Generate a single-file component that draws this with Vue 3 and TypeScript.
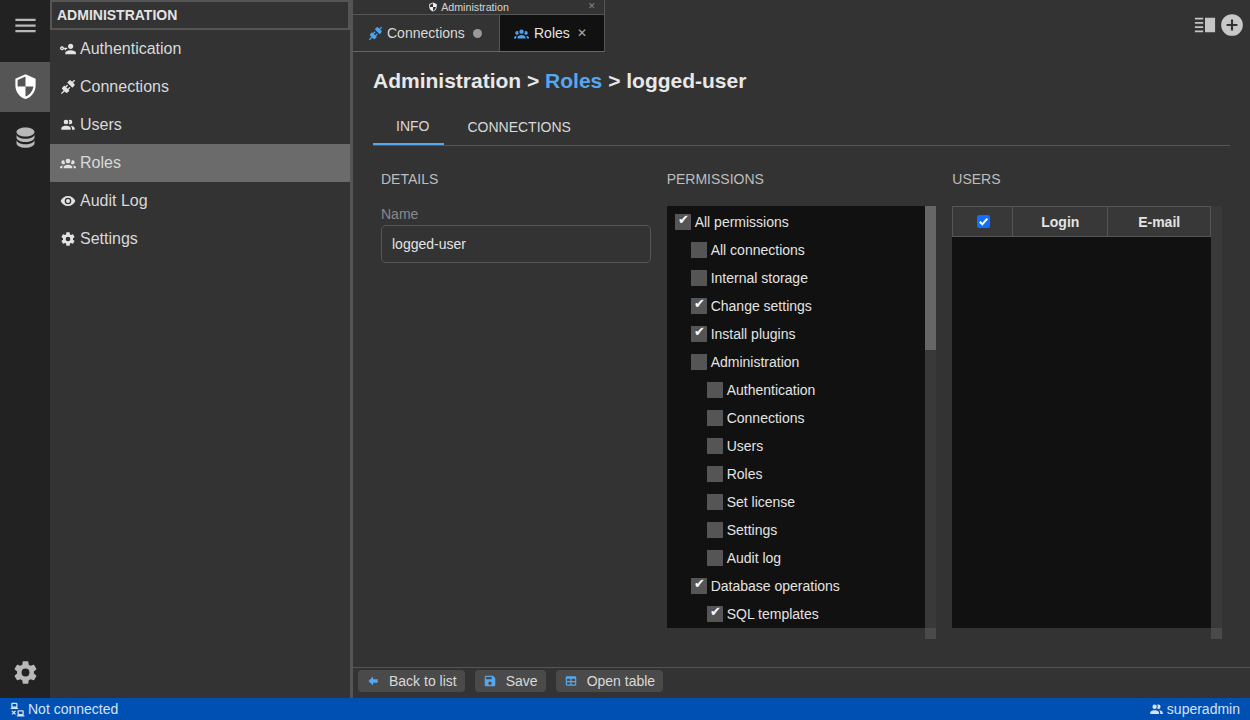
<script setup lang="ts">
const P = {
  menu: 'M3,6H21V8H3V6M3,11H21V13H3V11M3,16H21V18H3V16Z',
  database: 'M12,3C7.58,3 4,4.79 4,7C4,9.21 7.58,11 12,11C16.42,11 20,9.21 20,7C20,4.79 16.42,3 12,3M4,9V12C4,14.21 7.58,16 12,16C16.42,16 20,14.21 20,12V9C20,11.21 16.42,13 12,13C7.58,13 4,11.21 4,9M4,14V17C4,19.21 7.58,21 12,21C16.42,21 20,19.21 20,17V14C20,16.21 16.42,18 12,18C7.58,18 4,16.21 4,14Z',
  cog: 'M12,15.5A3.5,3.5 0 0,1 8.5,12A3.5,3.5 0 0,1 12,8.5A3.5,3.5 0 0,1 15.5,12A3.5,3.5 0 0,1 12,15.5M19.43,12.97C19.47,12.65 19.5,12.33 19.5,12C19.5,11.67 19.47,11.34 19.43,11L21.54,9.37C21.73,9.22 21.78,8.95 21.66,8.73L19.66,5.27C19.54,5.05 19.27,4.96 19.05,5.05L16.56,6.05C16.04,5.66 15.5,5.32 14.87,5.07L14.5,2.42C14.46,2.18 14.25,2 14,2H10C9.75,2 9.54,2.18 9.5,2.42L9.13,5.07C8.5,5.32 7.96,5.66 7.44,6.05L4.95,5.05C4.73,4.96 4.46,5.05 4.34,5.27L2.34,8.73C2.21,8.95 2.27,9.22 2.46,9.37L4.57,11C4.53,11.34 4.5,11.67 4.5,12C4.5,12.33 4.53,12.65 4.57,12.97L2.46,14.63C2.27,14.78 2.21,15.05 2.34,15.27L4.34,18.73C4.46,18.95 4.73,19.03 4.95,18.95L7.44,17.94C7.96,18.34 8.5,18.68 9.13,18.93L9.5,21.58C9.54,21.82 9.75,22 10,22H14C14.25,22 14.46,21.82 14.5,21.58L14.87,18.93C15.5,18.67 16.04,18.34 16.56,17.94L19.05,18.95C19.27,19.03 19.54,18.95 19.66,18.73L21.66,15.27C21.78,15.05 21.73,14.78 21.54,14.63L19.43,12.97Z',
  users: 'M16 17V19H2V17S2 13 9 13 16 17 16 17M12.5 7.5A3.5 3.5 0 1 0 9 11A3.5 3.5 0 0 0 12.5 7.5M15.94 13A5.32 5.32 0 0 1 18 17V19H22V17S22 13.37 15.94 13M15 4A3.39 3.39 0 0 0 13.07 4.59A5 5 0 0 1 13.07 10.41A3.39 3.39 0 0 0 15 11A3.5 3.5 0 0 0 15 4Z',
  group: 'M12,5.5A3.5,3.5 0 0,1 15.5,9A3.5,3.5 0 0,1 12,12.5A3.5,3.5 0 0,1 8.5,9A3.5,3.5 0 0,1 12,5.5M5,8C5.56,8 6.08,8.15 6.53,8.42C6.38,9.85 6.8,11.27 7.66,12.38C7.16,13.34 6.16,14 5,14A3,3 0 0,1 2,11A3,3 0 0,1 5,8M19,8A3,3 0 0,1 22,11A3,3 0 0,1 19,14C17.84,14 16.84,13.34 16.34,12.38C17.2,11.27 17.62,9.85 17.47,8.42C17.92,8.15 18.44,8 19,8M5.5,18.25C5.5,16.18 8.41,14.5 12,14.5C15.59,14.5 18.5,16.18 18.5,18.25V20H5.5V18.25M0,20V18.5C0,17.11 1.89,15.94 4.45,15.6C3.86,16.28 3.5,17.22 3.5,18.25V20H0M24,20H20.5V18.25C20.5,17.22 20.14,16.28 19.55,15.6C22.11,15.94 24,17.11 24,18.5V20Z',
  eye: 'M12,9A3,3 0 0,0 9,12A3,3 0 0,0 12,15A3,3 0 0,0 15,12A3,3 0 0,0 12,9M12,17A5,5 0 0,1 7,12A5,5 0 0,1 12,7A5,5 0 0,1 17,12A5,5 0 0,1 12,17M12,4.5C7,4.5 2.73,7.61 1,12C2.73,16.39 7,19.5 12,19.5C17,19.5 21.27,16.39 23,12C21.27,7.61 17,4.5 12,4.5Z',
  plug: 'M21.4 7.5C22.2 8.3 22.2 9.6 21.4 10.3L18.6 13.1L10.8 5.3L13.6 2.5C14.4 1.7 15.7 1.7 16.4 2.5L18.2 4.3L21.2 1.3L22.6 2.7L19.6 5.7L21.4 7.5M15.6 13.3L14.2 11.9L11.4 14.7L9.3 12.6L12.1 9.8L10.7 8.4L7.9 11.2L6.4 9.8L3.6 12.6C2.8 13.4 2.8 14.7 3.6 15.4L5.4 17.2L1.4 21.2L2.8 22.6L6.8 18.6L8.6 20.4C9.4 21.2 10.7 21.2 11.4 20.4L14.2 17.6L12.8 16.2L15.6 13.3Z',
  key: 'M11 10V12H9V14H7V12H5.8C5.4 13.2 4.3 14 3 14C1.3 14 0 12.7 0 11S1.3 8 3 8C4.3 8 5.4 8.8 5.8 10H11M3 10C2.4 10 2 10.4 2 11S2.4 12 3 12 4 11.6 4 11 3.6 10 3 10M16 14C18.7 14 24 15.3 24 18V20H8V18C8 15.3 13.3 14 16 14M16 12C13.8 12 12 10.2 12 8S13.8 4 16 4 20 5.8 20 8 18.2 12 16 12Z',
  back: 'M20,9V15H12V19.84L4.16,12L12,4.16V9H20Z',
  save: 'M15,9H5V5H15M12,19A3,3 0 0,1 9,16A3,3 0 0,1 12,13A3,3 0 0,1 15,16A3,3 0 0,1 12,19M17,3H5C3.89,3 3,3.9 3,5V19A2,2 0 0,0 5,21H19A2,2 0 0,0 21,19V7L17,3Z',
  table: 'M5,4H19A2,2 0 0,1 21,6V18A2,2 0 0,1 19,20H5A2,2 0 0,1 3,18V6A2,2 0 0,1 5,4M5,8V12H11V8H5M13,8V12H19V8H13M5,14V18H11V14H5M13,14V18H19V14H13Z',
  security: 'M12,12H19C18.47,16.11 15.72,19.78 12,20.92V12H5V6.3L12,3.19M12,1L3,5V11C3,16.55 6.84,21.73 12,23C17.16,21.73 21,16.55 21,11V5L12,1Z',
  plusCircle: 'M12,2A10,10 0 0,0 2,12A10,10 0 0,0 12,22A10,10 0 0,0 22,12A10,10 0 0,0 12,2M17,13H13V17H11V13H7V11H11V7H13V11H17V13Z',
  layout: 'M1,4H10V6H1V4M1,8.7H10V10.7H1V8.7M1,13.3H10V15.3H1V13.3M1,18H10V20H1V18M12,4H23V20H12V4Z',
  lan: 'M4,1C2.89,1 2,1.89 2,3V7C2,8.11 2.89,9 4,9H1V11H13V9H10C11.11,9 12,8.11 12,7V3C12,1.89 11.11,1 10,1H4M4,3H10V7H4V3M14,13C12.89,13 12,13.89 12,15V19C12,20.11 12.89,21 14,21H11V23H23V21H20C21.11,21 22,20.11 22,19V15C22,13.89 21.11,13 20,13H14M3.88,13.46L2.46,14.88L4.59,17L2.46,19.12L3.88,20.54L6,18.41L8.12,20.54L9.54,19.12L7.41,17L9.54,14.88L8.12,13.46L6,15.59L3.88,13.46M14,15H20V19H14V15Z',
}
const sideItems = [
  { label: 'Authentication', d: P.key },
  { label: 'Connections', d: P.plug },
  { label: 'Users', d: P.users },
  { label: 'Roles', d: P.group, active: true },
  { label: 'Audit Log', d: P.eye },
  { label: 'Settings', d: P.cog },
]
const perms = [
  { label: 'All permissions', level: 0, on: true },
  { label: 'All connections', level: 1, on: false },
  { label: 'Internal storage', level: 1, on: false },
  { label: 'Change settings', level: 1, on: true },
  { label: 'Install plugins', level: 1, on: true },
  { label: 'Administration', level: 1, on: false },
  { label: 'Authentication', level: 2, on: false },
  { label: 'Connections', level: 2, on: false },
  { label: 'Users', level: 2, on: false },
  { label: 'Roles', level: 2, on: false },
  { label: 'Set license', level: 2, on: false },
  { label: 'Settings', level: 2, on: false },
  { label: 'Audit log', level: 2, on: false },
  { label: 'Database operations', level: 1, on: true },
  { label: 'SQL templates', level: 2, on: true },
]
const buttons = [
  { label: 'Back to list', d: P.back },
  { label: 'Save', d: P.save },
  { label: 'Open table', d: P.table },
]
</script>

<template>
  <div class="app">
    <div class="body">
      <nav class="rail">
        <div class="rail-btn first"><svg class="rail-ico" viewBox="0 0 24 24"><path :d="P.menu" /></svg></div>
        <div class="rail-btn on">
          <svg class="rail-ico white" viewBox="0 0 24 24"><path :d="P.security" /></svg>
        </div>
        <div class="rail-btn"><svg class="rail-ico db" viewBox="0 0 24 24"><path :d="P.database" /></svg></div>
        <div class="rail-btn cog"><svg class="rail-ico" viewBox="0 0 24 24"><path :d="P.cog" /></svg></div>
      </nav>

      <aside class="side">
        <div class="side-head">ADMINISTRATION</div>
        <div v-for="it in sideItems" :key="it.label" class="side-item" :class="{ active: it.active }">
          <svg class="side-ico" viewBox="0 0 24 24"><path :d="it.d" /></svg>
          <span>{{ it.label }}</span>
        </div>
      </aside>

      <div class="split"></div>

      <main class="main">
        <header class="tabbar">
          <div class="tabgroup">
            <div class="group-head">
              <svg class="group-ico" viewBox="0 0 24 24"><path :d="P.security" /></svg>
              <span>Administration</span>
              <span class="group-x">✕</span>
            </div>
            <div class="tabs">
              <div class="tab">
                <svg class="tab-ico" viewBox="0 0 24 24"><path :d="P.plug" /></svg>
                <span>Connections</span>
                <i class="dot"></i>
              </div>
              <div class="tab cur">
                <svg class="tab-ico" viewBox="0 0 24 24"><path :d="P.group" /></svg>
                <span>Roles</span>
                <span class="tab-x">✕</span>
              </div>
            </div>
          </div>
          <div class="corner">
            <svg class="layout" viewBox="0 0 24 24"><path :d="P.layout" /></svg>
            <svg class="plus" viewBox="0 0 24 24"><path :d="P.plusCircle" /></svg>
          </div>
        </header>

        <section class="content">
          <h1 class="title">Administration &gt; <span class="link">Roles</span> &gt; logged-user</h1>
          <div class="subtabs">
            <div class="subtab cur">INFO</div>
            <div class="subtab">CONNECTIONS</div>
          </div>
          <div class="cols">
            <div class="col">
              <div class="cap">DETAILS</div>
              <label class="name-lab">Name</label>
              <div class="input">logged-user</div>
            </div>
            <div class="col">
              <div class="cap">PERMISSIONS</div>
              <div class="scrollbox">
                <div class="pane list">
                  <div v-for="p in perms" :key="p.label + p.level" class="perm" :class="'lv' + p.level">
                    <span class="cb"><span v-if="p.on" class="cb-check">✔</span></span>
                    <span>{{ p.label }}</span>
                  </div>
                </div>
                <div class="track"><div class="thumb"></div></div>
              </div>
              <div class="hbar"><div class="hcorner"></div></div>
            </div>
            <div class="col">
              <div class="cap">USERS</div>
              <div class="scrollbox">
                <div class="pane">
                  <div class="thead">
                    <div class="th c1"><span class="native"><svg viewBox="0 0 13 13"><path d="M2.8,6.8L5.3,9.3L10.3,3.6" /></svg></span></div>
                    <div class="th c2">Login</div>
                    <div class="th c3">E-mail</div>
                  </div>
                </div>
                <div class="track"></div>
              </div>
              <div class="hbar"><div class="hcorner"></div></div>
            </div>
          </div>
        </section>

        <footer class="toolbar">
          <button v-for="b in buttons" :key="b.label" class="btn">
            <svg class="btn-ico" viewBox="0 0 24 24"><path :d="b.d" /></svg>
            <span>{{ b.label }}</span>
          </button>
        </footer>
      </main>
    </div>

    <div class="status">
      <div class="st-item"><svg class="st-ico" viewBox="0 0 24 24"><path :d="P.lan" /></svg><span>Not connected</span></div>
      <div class="st-item"><svg class="st-ico" viewBox="0 0 24 24"><path :d="P.users" /></svg><span>superadmin</span></div>
    </div>
  </div>
</template>

<style>
html, body { margin: 0; background: #333; }
</style>

<style scoped>
.app {
  width: 1250px; height: 720px; display: flex; flex-direction: column; overflow: hidden;
  font-family: "Liberation Sans", Arial, sans-serif; color: #e3e3e3; background: #333; font-size: 14px;
}
.body { flex: 1; display: flex; min-height: 0; }

.rail { width: 50px; background: #222; display: flex; flex-direction: column; flex: none; }
.rail-btn { height: 50px; display: flex; align-items: center; justify-content: center; box-sizing: border-box; }
.rail-btn.first { height: 62px; padding-bottom: 12px; }
.rail-btn.on { background: #555; padding-bottom: 2px; }
.rail-btn.cog { margin-top: auto; height: 52px; }
.rail-ico { width: 27px; height: 27px; fill: #b8b8b8; }
.rail-ico.white { fill: #fff; }

.side { width: 300px; flex: none; background: #333; display: flex; flex-direction: column; }
.side-head {
  height: 30px; box-sizing: border-box; border: 2px solid #555;
  padding-left: 5px; display: flex; align-items: center; font-weight: 700; font-size: 14px; color: #e3e3e3;
}
.side-item { height: 38px; display: flex; align-items: center; padding-left: 10px; font-size: 16px; color: #d9d9d9; }
.side-item.active { background: #6b6b6b; }
.side-ico { width: 16px; height: 16px; fill: #e3e3e3; margin-right: 4px; flex: none; }

.split { width: 3px; flex: none; background: #555; }

.main { flex: 1; min-width: 0; display: flex; flex-direction: column; background: #333; }
.tabbar { height: 52px; flex: none; display: flex; }
.tabgroup { width: 251px; display: flex; flex-direction: column; border-right: 1px solid #555; }
.group-head {
  height: 14px; border-bottom: 1px solid #555; display: flex; align-items: center; justify-content: center;
  font-size: 10.7px; color: #d4d4d4; position: relative; gap: 3px; padding-right: 20px; box-sizing: content-box;
}
.group-ico { width: 10px; height: 10px; fill: #eee; }
.group-x { position: absolute; right: 8px; top: 1px; font-size: 9px; color: #888; }
.tabs { height: 37px; display: flex; border-bottom: 1px solid #666; box-sizing: border-box; }
.tab { width: 147px; display: flex; align-items: center; padding-left: 15px; box-sizing: border-box; border-right: 1px solid #555; font-size: 14px; color: #d9d9d9; }
.tab.cur { flex: 1; width: auto; background: #111; border-right: 0; color: #e3e3e3; padding-left: 14px; }
.tab-ico { width: 15px; height: 15px; fill: #4da3f0; margin-right: 4px; }
.tab.cur .tab-ico { margin-right: 5px; }
.dot { width: 9px; height: 9px; border-radius: 50%; background: #999; margin-left: 8px; }
.tab-x { font-size: 12px; color: #aaa; margin-left: 7px; }
.corner { margin-left: auto; display: flex; align-items: center; padding: 8px 5px 0 0; gap: 3px; height: 34px; }
.layout { width: 22px; height: 22px; fill: #c4c4c4; }
.plus { width: 26px; height: 26px; fill: #c8c8c8; }

.content { flex: 1; min-height: 0; padding: 0 20px; display: flex; flex-direction: column; border-bottom: 1px solid #555; overflow: hidden; }
.title { margin: 0; height: 58px; line-height: 58px; font-size: 21px; font-weight: 700; color: #e8e8e8; white-space: nowrap; }
.link { color: #55a8f0; }
.subtabs { height: 35px; display: flex; border-bottom: 1px solid #555; flex: none; }
.subtab { font-size: 14px; color: #d9d9d9; line-height: 35px; padding: 0 23px; box-sizing: border-box; height: 35px; }
.subtab.cur { line-height: 33px; padding-right: 15px; border-bottom: 2px solid #55a8f0; }

.cols { display: grid; grid-template-columns: repeat(3, 1fr); gap: 16px; padding: 0 8px; }
.col { min-width: 0; }
.cap { height: 60px; line-height: 66px; font-size: 14px; color: #bdbdbd; }
.name-lab { display: block; height: 19px; line-height: 16px; color: #8a8a8a; font-size: 14px; }
.input {
  height: 38px; box-sizing: border-box; border: 1px solid #555; border-radius: 5px; padding-left: 10px;
  display: flex; align-items: center; font-size: 14px; color: #e3e3e3;
}

.scrollbox { display: flex; height: 422px; }
.pane { flex: 1; min-width: 0; background: #111; overflow: hidden; box-sizing: border-box; }
.pane.list { padding-top: 2px; }
.track { width: 11px; flex: none; background: #393939; }
.thumb { height: 144px; background: #666; }
.hbar { height: 11px; display: flex; justify-content: flex-end; }
.hcorner { width: 11px; background: #4a4a4a; }

.perm { height: 28px; display: flex; align-items: center; font-size: 14px; color: #e3e3e3; }
.perm.lv0 { padding-left: 8px; }
.perm.lv1 { padding-left: 24px; }
.perm.lv2 { padding-left: 40px; }
.cb { width: 16px; height: 16px; background: #555; margin-right: 4px; flex: none; position: relative; display: block; }
.cb-check { position: absolute; left: 3px; top: -1px; font-size: 12.5px; line-height: 14px; color: #fff; }

.thead { display: flex; height: 31px; background: #383838; border: 1px solid #555; box-sizing: border-box; }
.th { display: flex; align-items: center; justify-content: center; font-weight: 700; font-size: 14px; color: #e3e3e3; box-sizing: border-box; }
.c1 { width: 60px; flex: none; border-right: 1px solid #555; padding-left: 2px; }
.c2 { width: 95px; flex: none; border-right: 1px solid #555; }
.c3 { flex: 1; }
.native { width: 13px; height: 13px; background: #0f6fff; border-radius: 2px; display: block; }
.native svg { width: 13px; height: 13px; display: block; fill: none; stroke: #fff; stroke-width: 2; }

.toolbar { height: 30px; flex: none; display: flex; align-items: flex-start; gap: 10px; padding: 2px 5px 0; box-sizing: border-box; }
.btn {
  height: 22px; padding: 0 8px; border: 0; border-radius: 4px; background: #4a4a4a; color: #d9d9d9;
  display: flex; align-items: center; font: inherit; font-size: 14px;
}
.btn-ico { width: 14px; height: 14px; fill: #55a8f0; margin-right: 9px; }

.status {
  height: 22px; flex: none; background: #0050b3; color: #d6e2f5; display: flex; align-items: center;
  justify-content: space-between; padding: 0 10px; font-size: 14px;
}
.st-item { display: flex; align-items: center; gap: 3px; }
.st-ico { width: 15px; height: 15px; fill: #d6e2f5; }
</style>
